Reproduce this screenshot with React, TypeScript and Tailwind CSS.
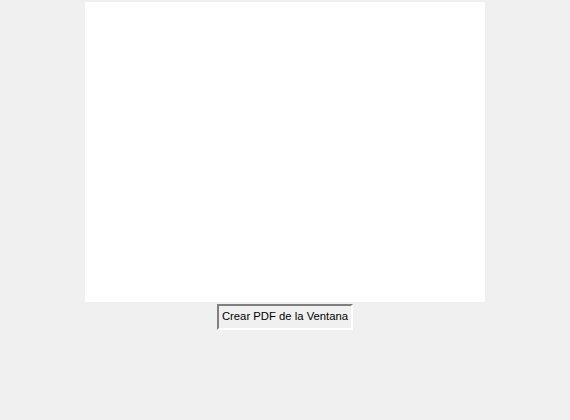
export default function App() {
  return (
    <div className="w-[570px] h-[420px] bg-[#f0f0f0] flex flex-col items-center pt-[2px]">
      {/* canvas area */}
      <div className="w-[400px] h-[300px] bg-white" />
      <button className="mt-[2px] h-[26px] w-[136px] px-0 bg-[#f0f0f0] border-2 border-t-[#808080] border-l-[#808080] border-b-white border-r-white text-[11.3px] text-black font-['Liberation_Sans',sans-serif] leading-none whitespace-nowrap flex items-center justify-center">
        Crear PDF de la Ventana
      </button>
    </div>
  );
}
